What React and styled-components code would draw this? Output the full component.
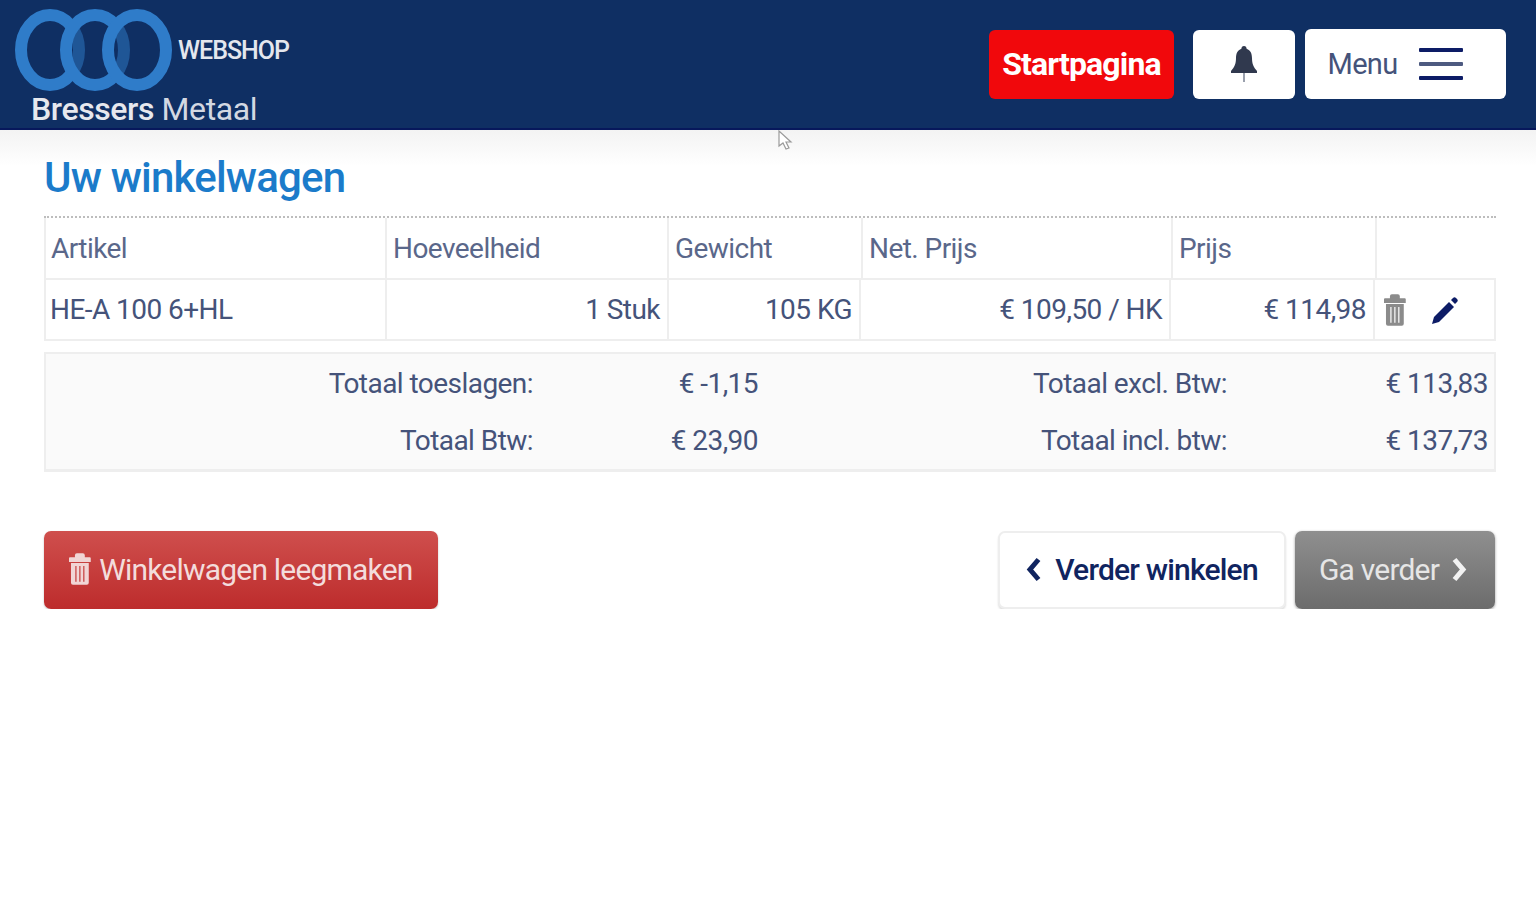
import React from "react";
import styled, { createGlobalStyle } from "styled-components";

const GlobalStyle = createGlobalStyle`
  html, body {
    margin: 0;
    background: #fff;
    font-family: Roboto, "Liberation Sans", sans-serif;
    color: #45537a;
  }
`;

const Header = styled.header`
  height: 130px;
  box-sizing: border-box;
  background: #0f2f63;
  border-bottom: 2px solid #07185c;
  display: flex;
  align-items: flex-start;
  justify-content: space-between;
  padding: 0 30px 0 15px;
`;

const Logo = styled.div`
  display: flex;
  flex-direction: column;
  padding-top: 9px;
`;

const LogoTop = styled.div`
  display: flex;
  align-items: center;
  gap: 5px;
`;

const Webshop = styled.span`
  font-size: 25px;
  font-weight: 500;
  letter-spacing: -1px;
  color: #e4e7ee;
`;

const Brand = styled.div`
  font-size: 32px;
  line-height: 34px;
  letter-spacing: -0.4px;
  color: #d3d8e2;
  margin: 1px 0 0 16px;
  b {
    font-weight: 500;
    color: #e6e8ee;
  }
`;

const Actions = styled.div`
  display: flex;
  align-items: center;
  padding-top: 29px;
`;

const HeaderButton = styled.div`
  height: ${(p) => p.$h || 69}px;
  width: ${(p) => p.$w}px;
  margin-left: ${(p) => p.$ml || 0}px;
  box-sizing: border-box;
  border-radius: 6px;
  background: ${(p) => p.$bg || "#fff"};
  display: flex;
  align-items: center;
  justify-content: center;
`;

const StartLabel = styled.span`
  font-size: 32px;
  font-weight: 700;
  letter-spacing: -0.85px;
  color: #fff;
`;

const MenuLabel = styled.span`
  font-size: 29px;
  color: #45537a;
  letter-spacing: -0.7px;
  margin-right: 22px;
`;

const Burger = styled.div`
  width: 44px;
  height: 32px;
  margin-right: 20px;
  display: flex;
  flex-direction: column;
  justify-content: space-between;
  i {
    display: block;
    height: 4px;
    border-radius: 1px;
    background: #0d1c66;
  }
  i:nth-child(2) {
    background: #4d5a80;
  }
`;

const Cursor = styled.svg`
  position: absolute;
  left: 777px;
  top: 130px;
`;

const Main = styled.main`
  padding: 0 40px 0 44px;
  background: linear-gradient(#f3f3f3 0, #fff 36px) no-repeat;
`;

const Title = styled.h1`
  margin: 0;
  height: 88px;
  box-sizing: border-box;
  padding-top: 20px;
  font-size: 42px;
  line-height: 56px;
  font-weight: 500;
  letter-spacing: -0.8px;
  color: #1b7bca;
  border-bottom: 2px dotted #bdbdbd;
`;

const Row = styled.div`
  display: grid;
  grid-template-columns: ${(p) => p.$cols};
  height: ${(p) => p.$h}px;
`;

const HeadCell = styled.div`
  box-sizing: border-box;
  border: solid #eeeeee;
  border-width: 0 2px 2px 0;
  &:first-child {
    border-left-width: 2px;
    padding-left: 5px;
  }
  padding-left: 6px;
  display: flex;
  align-items: center;
  font-size: 28px;
  letter-spacing: -0.55px;
  color: #5a678a;
`;

const Cell = styled.div`
  box-sizing: border-box;
  border: solid #eeeeee;
  border-width: ${(p) => (p.$top ? "2px" : "0")} 2px 2px 0;
  margin-top: ${(p) => (p.$top ? "-2px" : "0")};
  &:first-child {
    border-left-width: 2px;
    padding-left: 4px;
  }
  padding: 0 7px 0 6px;
  display: flex;
  align-items: center;
  justify-content: ${(p) => (p.$right ? "flex-end" : "flex-start")};
  font-size: 28px;
  letter-spacing: -0.55px;
`;

const RowIcons = styled.div`
  display: flex;
  align-items: center;
  gap: 26px;
  padding-left: 3px;
`;

const Totals = styled.div`
  margin-top: 11px;
  height: 120px;
  box-sizing: border-box;
  background: #fafafa;
  border: 2px solid #eeeeee;
  border-bottom-width: 3px;
  display: grid;
  grid-template-columns: 487px 225px 469px 261px;
  grid-auto-rows: 57px;
  padding-top: 1px;
`;

const TotalText = styled.div`
  display: flex;
  align-items: center;
  justify-content: flex-end;
  font-size: 28px;
  letter-spacing: -0.55px;
  color: #45537a;
`;

const Buttons = styled.div`
  margin-top: 59px;
  display: flex;
  gap: 9px;
  width: 1451px;
`;

const Button = styled.div`
  height: 78px;
  width: ${(p) => p.$w}px;
  box-sizing: border-box;
  padding: 0 ${(p) => p.$pr || 0}px 2px 0;
  border-radius: 7px;
  display: flex;
  align-items: center;
  justify-content: center;
  gap: ${(p) => p.$gap || 8}px;
  font-size: 30px;
  letter-spacing: -0.8px;
  ${(p) => p.$push && "margin-right: auto;"}
  ${(p) =>
    p.$kind === "danger" &&
    "background: linear-gradient(#cf4f4d, #bd2c2c); color: #f3dcdc; box-shadow: 0 1px 2px rgba(0,0,0,.25);"}
  ${(p) =>
    p.$kind === "plain" &&
    "background: #fff; color: #10245f; font-weight: 500; border: 2px solid #eeeeee; box-shadow: 0 2px 2px rgba(0,0,0,.12);"}
  ${(p) =>
    p.$kind === "muted" &&
    "background: linear-gradient(#8f8f8f, #6c6c6c); color: #e6e6e6; box-shadow: 0 1px 3px rgba(0,0,0,.4);"}
`;

const TrashIcon = ({ height, color }) => (
  <svg width={height * 0.68} height={height} viewBox="0 0 22 32" fill={color}>
    <path d="M8 0h6a2 2 0 0 1 2 2v2h5a1 1 0 0 1 1 1v4H0V5a1 1 0 0 1 1-1h5V2a2 2 0 0 1 2-2z" />
    <path
      fillRule="evenodd"
      d="M2 10h18v20a2 2 0 0 1-2 2H4a2 2 0 0 1-2-2zM6.4 13v16h1.2V13zm4 0v16h1.2V13zm4 0v16h1.2V13z"
    />
  </svg>
);

const BellIcon = () => (
  <svg width="26" height="37" viewBox="0 0 26 37">
    <rect x="12" y="27" width="2" height="9" fill="#9aa0ad" />
    <path
      fill="#30394e"
      d="M13 0c1.6 0 2.6 1.2 2.6 2.8 4 1.4 5.4 5 5.4 9.2 0 6 1.6 9 5 13v2H0v-2c3.4-4 5-7 5-13 0-4.2 1.4-7.8 5.4-9.2C10.4 1.2 11.4 0 13 0z"
    />
  </svg>
);

const PencilIcon = () => (
  <svg width="27" height="28" viewBox="0 0 27 28" fill="#0d1c66">
    <path d="M0 28l2-7L17 6l5 5L7 26z" />
    <path d="M19 4l2-2c1-1 2-1 3 0l1 1c1 1 1 2 0 3l-2 2z" />
  </svg>
);

const Chevron = ({ left, color }) => (
  <svg width="15" height="25" viewBox="0 0 15 25" fill="none" stroke={color} strokeWidth="5">
    <path d={left ? "M12.5 2.5L4 12.5l8.5 10" : "M2.5 2.5L11 12.5l-8.5 10"} />
  </svg>
);

const RingsLogo = () => (
  <svg width="158" height="82" viewBox="0 0 158 82" stroke="#2f7cc9" strokeWidth="12" fill="#0f2f63" fillOpacity="0.5">
    <ellipse cx="35" cy="41" rx="29" ry="35" fillOpacity="0" />
    <ellipse cx="80" cy="41" rx="29" ry="35" />
    <ellipse cx="122" cy="41" rx="29" ry="35" />
  </svg>
);

export default function App() {
  const headCols = "343px 282px 194px 310px 204px";
  const rowCols = "343px 282px 192px 310px 204px 121px";

  return (
    <>
      <GlobalStyle />
      <Header>
        <Logo>
          <LogoTop>
            <RingsLogo />
            <Webshop>WEBSHOP</Webshop>
          </LogoTop>
          <Brand>
            <b>Bressers</b> Metaal
          </Brand>
        </Logo>
        <Actions>
          <HeaderButton $w={185} $bg="#f1080c">
            <StartLabel>Startpagina</StartLabel>
          </HeaderButton>
          <HeaderButton $w={102} $ml={19}>
            <BellIcon />
          </HeaderButton>
          <HeaderButton $w={201} $h={70} $ml={10}>
            <MenuLabel>Menu</MenuLabel>
            <Burger>
              <i />
              <i />
              <i />
            </Burger>
          </HeaderButton>
        </Actions>
      </Header>
      <Cursor width="16" height="22" viewBox="0 0 16 22">
        <path d="M2 1v15l4-3 3 6 3-1-3-6h5z" fill="#fff" stroke="#9a9a9a" strokeWidth="1.2" />
      </Cursor>
      <Main>
        <Title>Uw winkelwagen</Title>
        <Row $cols={headCols} $h={62}>
          <HeadCell>Artikel</HeadCell>
          <HeadCell>Hoeveelheid</HeadCell>
          <HeadCell>Gewicht</HeadCell>
          <HeadCell>Net. Prijs</HeadCell>
          <HeadCell>Prijs</HeadCell>
        </Row>
        <Row $cols={rowCols} $h={61}>
          <Cell>HE-A 100 6+HL</Cell>
          <Cell $right>1 Stuk</Cell>
          <Cell $right>105 KG</Cell>
          <Cell $right>€ 109,50 / HK</Cell>
          <Cell $right>€ 114,98</Cell>
          <Cell $top>
            <RowIcons>
              <TrashIcon height={32} color="#8b8b8b" />
              <PencilIcon />
            </RowIcons>
          </Cell>
        </Row>
        <Totals>
          <TotalText>Totaal toeslagen:</TotalText>
          <TotalText>€ -1,15</TotalText>
          <TotalText>Totaal excl. Btw:</TotalText>
          <TotalText>€ 113,83</TotalText>
          <TotalText>Totaal Btw:</TotalText>
          <TotalText>€ 23,90</TotalText>
          <TotalText>Totaal incl. btw:</TotalText>
          <TotalText>€ 137,73</TotalText>
        </Totals>
        <Buttons>
          <Button $kind="danger" $w={394} $push>
            <TrashIcon height={32} color="#f1d5d5" />
            Winkelwagen leegmaken
          </Button>
          <Button $kind="plain" $w={288} $gap={14}>
            <Chevron left color="#10245f" />
            Verder winkelen
          </Button>
          <Button $kind="muted" $w={200} $gap={13} $pr={4}>
            Ga verder
            <Chevron color="#f2f2f2" />
          </Button>
        </Buttons>
      </Main>
    </>
  );
}
